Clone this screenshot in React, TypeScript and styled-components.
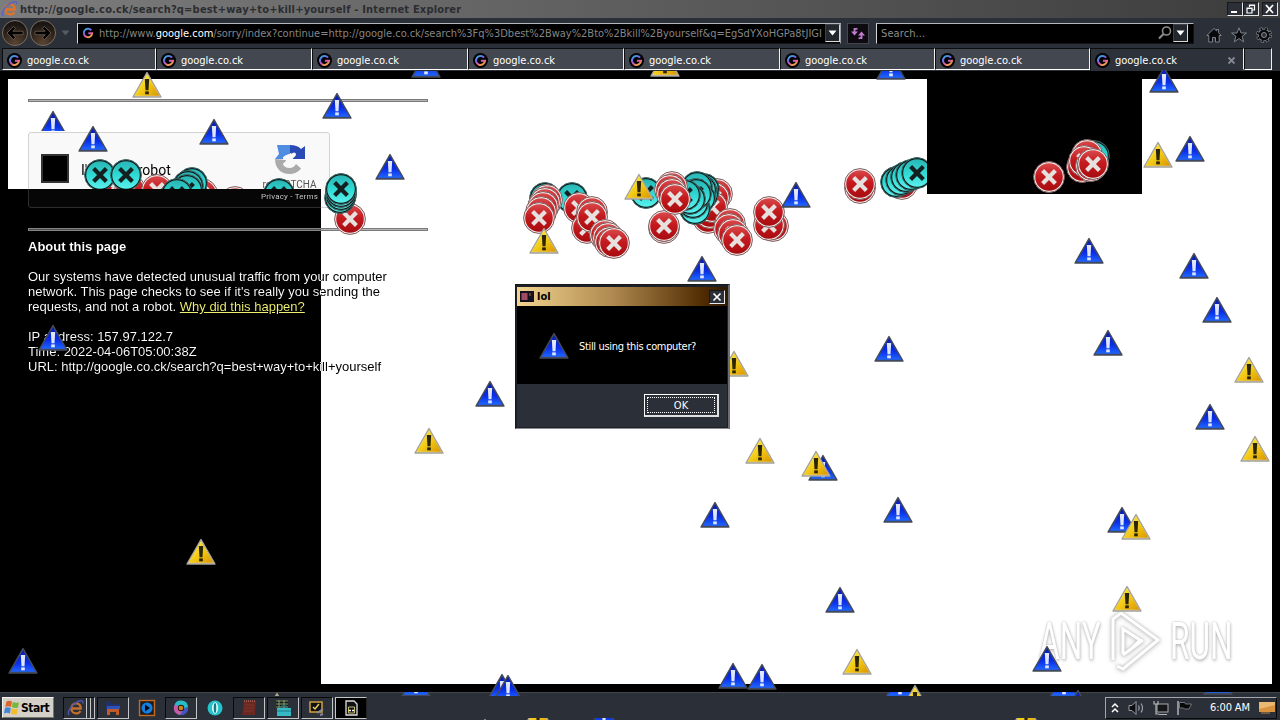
import React from 'react';
import styled, { createGlobalStyle, css } from 'styled-components';

type SpriteKind = 'blue' | 'yellow' | 'red' | 'cyan';

interface SpriteData {
  kind: SpriteKind;
  x: number;
  y: number;
  from?: number;
  to?: number;
  right?: number;
}

const tri = (kind: SpriteKind, list: number[][]): SpriteData[] =>
  list.map(([x, y, from, to]) => ({ kind, x, y, from, to }));

// x is the centre, y is the top of the triangle, then optional first and last visible rows
const backTriangles: SpriteData[] = [
  ...tri('blue', [
    [53, 110, 0, 131], [93, 125], [214, 118], [337, 92], [390, 153],
    [426, 51, 71], [891, 53, 71], [1164, 66, 70], [1190, 135], [702, 255],
    [1089, 237], [1194, 252], [1217, 296], [1108, 329], [889, 335],
    [490, 380], [1210, 403], [823, 454], [715, 501], [898, 496],
    [1122, 506], [840, 586], [1047, 645], [53, 324], [23, 647],
    [502, 673, 0, 696], [508, 674, 0, 696], [733, 662], [762, 663],
    [416, 670, 692, 696], [900, 671, 692, 696], [1064, 671, 692, 696], [1078, 689, 0, 696],
    [1218, 668, 692, 695], [604, 701, 718],
  ]),
  ...tri('yellow', [
    [147, 71], [665, 50, 71], [1158, 141], [734, 350], [1249, 356],
    [1255, 435], [760, 437], [816, 450], [429, 427], [201, 538],
    [1136, 513], [1127, 585], [857, 648], [915, 684, 0, 696],
    [538, 701, 718], [1026, 701, 718], [277, 692, 0, 696], [485, 718],
  ]),
];

const disc = (kind: SpriteKind, list: number[][], to?: number, right?: number): SpriteData[] =>
  list.map(([x, y]) => ({ kind, x, y: y - 16, to, right }));

const discs: SpriteData[] = [
  ...disc('red', [[115, 188], [130, 190], [157, 190], [202, 194], [235, 202]], 189),
  ...disc('cyan', [[100, 175], [126, 175], [192, 183], [188, 186], [187, 190], [177, 194], [279, 194]], 189),
  ...disc('red', [[350, 219]]),
  ...disc('cyan', [[340, 198], [341, 195], [341, 192], [341, 189]]),

  ...disc('cyan', [[545, 198], [572, 198]]),
  ...disc('red', [
    [547, 200], [545, 203], [543, 207], [541, 212], [539, 218],
    [579, 208], [587, 228], [592, 212], [592, 217],
    [605, 235], [608, 238], [610, 242], [614, 243],
  ]),
  ...disc('cyan', [[646, 193]]),
  ...disc('red', [
    [664, 228], [664, 226], [717, 194], [714, 198], [708, 218],
    [710, 213], [712, 207], [730, 224], [729, 229], [733, 234], [737, 240],
  ]),
  ...disc('cyan', [[704, 189], [703, 194], [701, 190], [697, 187], [700, 198], [695, 209], [693, 203], [696, 194], [690, 199], [685, 195]]),
  ...disc('red', [[672, 187], [670, 190], [672, 194], [675, 199]]),
  ...disc('red', [[773, 226], [769, 225], [769, 212]]),

  ...disc('red', [[860, 188], [860, 184]]),
  ...disc('red', [[902, 184]], undefined, 927),
  ...disc('cyan', [[896, 182], [901, 180], [906, 177], [911, 175], [917, 173]], undefined, 927),
  ...disc('red', [[1049, 177]]),
  ...disc('cyan', [[1094, 156]]),
  ...disc('red', [[1087, 155], [1082, 167], [1084, 161], [1091, 166], [1093, 164]]),
];

const frontTriangles: SpriteData[] = [
  ...tri('yellow', [[639, 173], [544, 227]]),
  ...tri('blue', [[796, 181]]),
];

const sprites = [...backTriangles, ...discs, ...frontTriangles];

const Gradients = () => (
  <HiddenSvg width="0" height="0">
    <defs>
      <linearGradient id="blueFill" x1="0" y1="0" x2="0" y2="1">
        <stop offset="0" stopColor="#0a1cb0" />
        <stop offset="0.6" stopColor="#0a2fe8" />
        <stop offset="1" stopColor="#1f66ff" />
      </linearGradient>
      <linearGradient id="yellowFill" x1="0" y1="0" x2="1" y2="1">
        <stop offset="0" stopColor="#fff34a" />
        <stop offset="0.55" stopColor="#f2c814" />
        <stop offset="1" stopColor="#da9400" />
      </linearGradient>
      <linearGradient id="redFill" x1="0" y1="0" x2="0" y2="1">
        <stop offset="0" stopColor="#d9494b" />
        <stop offset="0.45" stopColor="#c41a1f" />
        <stop offset="1" stopColor="#a80c10" />
      </linearGradient>
      <linearGradient id="cyanFill" x1="0" y1="0" x2="0" y2="1">
        <stop offset="0" stopColor="#2ab5b4" />
        <stop offset="0.5" stopColor="#2fd9d4" />
        <stop offset="1" stopColor="#5af0ec" />
      </linearGradient>
      <linearGradient id="googleRing" x1="0" y1="0" x2="0.6" y2="1">
        <stop offset="0" stopColor="#22b8d8" />
        <stop offset="0.45" stopColor="#7b62e8" />
        <stop offset="0.75" stopColor="#e65aa8" />
        <stop offset="1" stopColor="#e8a040" />
      </linearGradient>
    </defs>
  </HiddenSvg>
);

const Triangle = ({ kind }: { kind: SpriteKind }) => {
  const blue = kind === 'blue';
  return (
    <svg width="32" height="28" viewBox="0 0 32 28">
      <path d="M16 1.6 30 26H2Z" fill={blue ? '#3c4468' : '#ddd9c4'} stroke={blue ? '#454b58' : '#a5a195'} strokeWidth="1.4" strokeLinejoin="round" />
      <path d="M16 3.2 28.4 24.8H3.6Z" fill={`url(#${blue ? 'blueFill' : 'yellowFill'})`} />
      <path d="M13.8 8h4.4l-.7 11.3h-3Z" fill={blue ? '#dfe6ff' : '#2a2400'} />
      <rect x="14.2" y="20.4" width="3.6" height="2.9" fill={blue ? '#dfe6ff' : '#2a2400'} />
    </svg>
  );
};

const Disc = ({ kind }: { kind: SpriteKind }) => {
  const red = kind === 'red';
  return (
    <svg width="32" height="32" viewBox="0 0 32 32">
      <circle cx="16" cy="16" r="15.4" fill={red ? '#f4eeee' : '#0c1818'} stroke={red ? '#7d5a5a' : '#3f6a6a'} strokeWidth="1" />
      <circle cx="16" cy="16" r="13.8" fill={`url(#${red ? 'redFill' : 'cyanFill'})`} />
      <path d="m9.6 9.6 12.8 12.8m0-12.8L9.6 22.4" stroke={red ? '#e6e0de' : '#14201f'} strokeWidth="4.2" />
    </svg>
  );
};

const GoogleMark = ({ size = 15 }: { size?: number }) => (
  <svg width={size} height={size} viewBox="0 0 16 16">
    <circle cx="8" cy="8" r="8" fill="#000" />
    <path d="M11.8 5A4.8 4.8 0 1 0 12.8 8.3H8.4" fill="none" stroke="url(#googleRing)" strokeWidth="2.2" />
  </svg>
);

const IeMark = ({ dim }: { dim?: boolean }) => (
  <svg width="18" height="18" viewBox="0 0 18 18">
    <path d="M4.5 9.5h9.2c.2-3-1.8-5.2-4.5-5.2S4.4 6.5 4.4 9.4s2 5 4.8 5c2 0 3.400-.9 4.200-2.500" fill="none" stroke={dim ? '#c06f2c' : '#e0732a'} strokeWidth="2.3" />
    <path d="M2 16C-.5 13 5 5 11 2.500c4-1.600 5.500-.5 4.700 2" fill="none" stroke={dim ? '#4d55b0' : '#5a62c8'} strokeWidth="1.4" />
  </svg>
);

const Arrow = ({ flip }: { flip?: boolean }) => (
  <svg width="24" height="24" viewBox="0 0 24 24">
    <g transform={flip ? 'matrix(-1 0 0 1 24 0)' : undefined}>
      <path d="m4 12 6.500-6.500 2 2-2.700 2.800H20v3.400H9.800l2.700 2.800-2 2Z" fill="#020202" stroke="#8a7866" strokeWidth="0.6" />
    </g>
  </svg>
);

const Caret = ({ color = '#fff' }: { color?: string }) => (
  <svg width="9" height="6" viewBox="0 0 9 6"><path d="M.5.5h8l-4 5Z" fill={color} /></svg>
);

const RecaptchaLogo = () => (
  <svg width="32" height="32" viewBox="0 0 32 32">
    <path d="M3 2h13v10h-4L9 16H1l4-5Z" fill="#4f8de2" />
    <path d="M16 2c5 0 8 1 11 4l4-3v13H17l4-4-5-2Z" fill="#2a4bb5" />
    <path d="M1 16c0 9 6 15 14.500 15 5 0 9-2.200 11.500-5.500l-5-4.500c-1.400 2.500-3.500 4-6.500 4-3.400 0-5.500-1.400-6.700-4l4-4Z" fill="#ababab" />
    <path d="m11 15 4-2M14 17.500l6-6" stroke="#f9f9f9" strokeWidth="4" strokeLinecap="round" />
  </svg>
);

const App: React.FC = () => (
  <>
    <GlobalStyle />
    <Gradients />
    <Screen>
      <TitleBar>
        <IeMark />
        <WindowTitle>http://google.co.ck/search?q=best+way+to+kill+yourself - Internet Explorer</WindowTitle>
        <WindowButton><svg width="12" height="10"><path d="M2 8h6" stroke="#fff" strokeWidth="2" /></svg></WindowButton>
        <WindowButton>
          <svg width="12" height="10"><path d="M4.500 3V1h5v5h-2M2 4h5v5H2ZM2 4.500h5M4.500 1.500h5" fill="none" stroke="#fff" strokeWidth="1.2" /></svg>
        </WindowButton>
        <WindowButton $gap><svg width="12" height="10"><path d="m2 1 7 8m0-8L2 9" stroke="#fff" strokeWidth="1.7" /></svg></WindowButton>
      </TitleBar>

      <NavBar>
        <RoundButton><Arrow /></RoundButton>
        <RoundButton><Arrow flip /></RoundButton>
        <HistoryCaret><Caret color="#565b68" /></HistoryCaret>
        <AddressField>
          <GoogleMark size={14} />
          <Address>http://www.<b>google.com</b>/sorry/index?continue=http://google.co.ck/search%3Fq%3Dbest%2Bway%2Bto%2Bkill%2Byourself&amp;q=EgSdYXoHGPa8tJIGI</Address>
          <DropButton><Caret /></DropButton>
        </AddressField>
        <RefreshButton>
          <svg width="18" height="15" viewBox="0 0 18 15">
            <path d="M5.500 2v5M12.500 13V8M5.500 3.500l3-1M12.500 11.500l-3 1" stroke="#c07ace" strokeWidth="1.8" />
            <path d="M2 5.500h7L5.500 9.500ZM9 9.500h7L12.500 5.500Z" fill="#c07ace" />
          </svg>
        </RefreshButton>
        <SearchField>
          <Search>Search...</Search>
          <svg width="16" height="16" viewBox="0 0 16 16"><circle cx="9.500" cy="6" r="4" fill="none" stroke="#8c8c8c" strokeWidth="1.6" /><path d="M6.500 9 2 13.500" stroke="#8c8c8c" strokeWidth="2.2" /></svg>
          <DropButton><Caret /></DropButton>
        </SearchField>
        <ToolIcons>
          <svg width="16" height="16" viewBox="0 0 16 16"><path d="M8 1.500.8 8.500h2V15h3.700v-4.500h3V15h3.700V8.500h2L12.500 5.700V2.500h-2v1.400Z" fill="#090a0c" stroke="#8c9097" strokeWidth="0.9" /></svg>
          <svg width="16" height="16" viewBox="0 0 16 16"><path d="m8 .8 2 5.200h5.400l-4.300 3.300 1.600 5.500L8 11.500l-4.700 3.300 1.600-5.500L.6 6H6Z" fill="#090a0c" stroke="#8c9097" strokeWidth="0.9" /></svg>
          <svg width="16" height="16" viewBox="0 0 16 16">
            <circle cx="8" cy="8" r="6.4" fill="none" stroke="#8c9097" strokeWidth="3" strokeDasharray="2.8 2.227" />
            <circle cx="8" cy="8" r="5.4" fill="none" stroke="#8c9097" strokeWidth="1.6" />
            <circle cx="8" cy="8" r="6.4" fill="none" stroke="#090a0c" strokeWidth="2" strokeDasharray="1.8 3.227" strokeDashoffset="-0.5" />
            <circle cx="8" cy="8" r="4.1" fill="none" stroke="#090a0c" strokeWidth="2.6" />
            <circle cx="8" cy="8" r="2.5" fill="none" stroke="#8c9097" strokeWidth="0.9" />
          </svg>
        </ToolIcons>
      </NavBar>

      <TabStrip>
        {[154, 156, 156, 156, 156, 155, 155].map((w, i) => (
          <Tab key={i} $width={w}><GoogleMark />google.co.ck</Tab>
        ))}
        <Tab $width={154} $active>
          <GoogleMark />google.co.ck
          <TabClose><path d="m1.500 1.500 6 6m0-6-6 6" stroke="#85888e" strokeWidth="1.8" /></TabClose>
        </Tab>
        <NewTab />
      </TabStrip>

      <Viewport>
        <Page>
          <Rule />
          <Captcha>
            <Checkbox />
            <CaptchaLabel>I'm not a robot</CaptchaLabel>
            <CaptchaBrand>
              <RecaptchaLogo />
              <BrandName>reCAPTCHA</BrandName>
              <BrandLinks>Privacy - Terms</BrandLinks>
            </CaptchaBrand>
          </Captcha>
          <Rule />
          <About>
            <b>About this page</b>
            <p>
              Our systems have detected unusual traffic from your computer network. This page checks
              to see if it's really you sending the requests, and not a robot. <PageLink>Why did this happen?</PageLink>
            </p>
            <Details>
              IP address: 157.97.122.7<br />
              Time: 2022-04-06T05:00:38Z<br />
              URL: http://google.co.ck/search?q=best+way+to+kill+yourself
            </Details>
          </About>
          <InvertedArea />
          <BlackPatch />
        </Page>
      </Viewport>

      <Taskbar>
        <StartButton>
          <svg width="16" height="15" viewBox="0 0 16 15">
            <path d="M2.500 1.500q2.500-1.500 5.500 0L7 7q-3-1.500-5.800 0Z" fill="#e2622c" />
            <path d="M8.800 2q3.200 1.500 6.200.3L14 7.500q-3 1.200-6.200-.4Z" fill="#76b83e" />
            <path d="M1 8q2.500-1.500 5.800 0l-1 5.500q-3-1.500-5.800 0Z" fill="#3f87d8" />
            <path d="M7.600 8.300q3 1.500 6.200.3l-1 5.400q-3 1.200-6.200-.4Z" fill="#f3bd2b" />
          </svg>
          Start
        </StartButton>
        <TaskList>
          <TaskButton $stacked><IeMark dim /></TaskButton>
          <TaskButton>
            <svg width="18" height="18" viewBox="0 0 18 18"><path d="M2 3h5l1 2h8v7H2Z" fill="#22306e" /><path d="M3 7h13v3H3Z" fill="#2d52b8" /><path d="M3 16v-6h12v6h-3v-3H6v3Z" fill="#c05a2a" /></svg>
          </TaskButton>
          <TaskButton $flat>
            <svg width="18" height="18" viewBox="0 0 18 18"><rect x="1.500" y="1.500" width="15" height="15" fill="#1b1d24" stroke="#c46a20" strokeWidth="1.4" /><circle cx="9" cy="9" r="5.500" fill="#1480e0" /><path d="m7 5.500 5 3.500-5 3.500Z" fill="#05070c" /></svg>
          </TaskButton>
          <TaskButton>
            <svg width="18" height="18" viewBox="0 0 18 18"><circle cx="9" cy="9" r="7" fill="#25a7b8" /><path d="M2.500 6A7 7 0 0 1 16 8H9Z" fill="#28bcc8" /><path d="M2.500 6A7 7 0 0 0 8 16l3-6-4-3Z" fill="#c75aa8" /><path d="M16 8a7 7 0 0 1-8 8l4-6Z" fill="#4a4fc8" /><circle cx="9" cy="9" r="3.200" fill="#2a1608" /><circle cx="9" cy="9" r="2.300" fill="#d08020" /></svg>
          </TaskButton>
          <TaskButton $flat>
            <svg width="18" height="18" viewBox="0 0 18 18"><circle cx="9" cy="9" r="7.500" fill="#25c4cc" /><ellipse cx="9" cy="9" rx="3" ry="5.800" fill="#e8ffff" /><ellipse cx="9" cy="9" rx="1.300" ry="5" fill="#157c84" /></svg>
          </TaskButton>
          <TaskButton>
            <svg width="18" height="18" viewBox="0 0 18 18"><path d="M4 2h12l-1 14H2Z" fill="#6b2720" /><path d="M4 2h12" stroke="#b06a58" strokeWidth="1.500" strokeDasharray="1 1" /><path d="m5 6 9 .1M5 9h9M4 12h9" stroke="#7d382e" /></svg>
          </TaskButton>
          <TaskButton>
            <svg width="18" height="18" viewBox="0 0 18 18"><path d="M2 1h12v8H2Z" fill="#0d1a10" /><path d="M2 2h12M2 5h12M2 8h12M5 1v8M10 1v8" stroke="#8b9a78" /><path d="M3 9h14v8H3Z" fill="#35b9c4" /><path d="M7 9V7h6v2M3 12h14" fill="none" stroke="#1c7882" /></svg>
          </TaskButton>
          <TaskButton>
            <svg width="18" height="18" viewBox="0 0 18 18"><rect x="2" y="3" width="12" height="10" fill="#111" stroke="#d0a43c" strokeWidth="1.500" /><path d="m5 8 2 2 4-5" stroke="#e8d060" fill="none" strokeWidth="1.500" /><path d="m9 14 6-4m-3 6 3-1" stroke="#8a8a98" strokeWidth="2" /></svg>
          </TaskButton>
          <TaskButton $pressed>
            <svg width="16" height="18" viewBox="0 0 16 18"><path d="M3 2h8l3 3v11H3Z" fill="#111" stroke="#ddd" strokeWidth="1.300" /><path d="M5.500 8h6v6h-6Z" fill="none" stroke="#c8c070" /><path d="M6 11.500h5" stroke="#fff" strokeWidth="1.500" strokeDasharray="2 1" /></svg>
          </TaskButton>
        </TaskList>
        <Tray>
          <svg width="8" height="12" viewBox="0 0 8 12"><path d="m1 5 3-3 3 3M1 10l3-3 3 3" fill="none" stroke="#fff" strokeWidth="1.500" /></svg>
          <TrayIcons>
            <svg width="17" height="16" viewBox="0 0 17 16"><path d="M1 5.500h3l4-4v13l-4-4H1Z" fill="#0c0d10" stroke="#9a9da2" /><path d="M10.500 5.500q1.500 2.500 0 5M13 3.500q3 4.500 0 9" fill="none" stroke="#9a9da2" strokeWidth="1.200" /></svg>
            <svg width="17" height="16" viewBox="0 0 17 16"><rect x="5" y="4" width="11" height="8" fill="#14161a" stroke="#aaa" /><path d="M7 14.500h8M2 1v3h4V1M4 4v10h3M1.500 4h5" fill="none" stroke="#b5b5b5" strokeWidth="1.200" /></svg>
            <svg width="17" height="16" viewBox="0 0 17 16"><path d="M2 1v14" stroke="#b5b5b5" strokeWidth="1.500" /><path d="M3.500 2.500h5l1 1.500h6L13 9H8.500l-1-1h-4Z" fill="#08090b" stroke="#85888c" strokeWidth="0.800" /></svg>
          </TrayIcons>
          <Clock>6:00 AM</Clock>
          <svg width="16" height="14" viewBox="0 0 16 14"><path d="M0 1h16v10H0Z" fill="#d9933f" /><path d="M0 1h16v3L0 8Z" fill="#ebb872" /><path d="M2 12h9" stroke="#8a6a42" strokeWidth="1.500" /></svg>
        </Tray>
      </Taskbar>

      <Watermark>
        <WatermarkWord>ANY</WatermarkWord>
        <PlayMark>
          <path d="M5 49V8l8-6 37 27-35 29-6-3M15 43V18l17 11-9 9M15 44l20-15" fill="none" stroke="#fff" strokeWidth="3" />
        </PlayMark>
        <WatermarkWord>RUN</WatermarkWord>
      </Watermark>

      {sprites.map((s, i) => (
        <Sprite key={i} style={{ left: s.x - 16, top: s.y, clipPath: clipFor(s) }}>
          {s.kind === 'blue' || s.kind === 'yellow' ? <Triangle kind={s.kind} /> : <Disc kind={s.kind} />}
        </Sprite>
      ))}

      <Dialog>
        <DialogTitle>
          <svg width="14" height="11"><path d="M0 0h14v11H0Z" fill="#151020" /><path d="M1.500 2h6v7h-6Z" fill="#a04c5e" /><path d="M9 2h2v3H9Z" fill="#6a3b30" /></svg>
          <span>lol</span>
          <WindowButton><svg width="12" height="10"><path d="m2.500 1.500 7 7m0-7-7 7" stroke="#fff" strokeWidth="1.7" /></svg></WindowButton>
        </DialogTitle>
        <DialogBody><Triangle kind="blue" />Still using this computer?</DialogBody>
        <DialogFooter><OkButton><span>OK</span></OkButton></DialogFooter>
      </Dialog>
    </Screen>
  </>
);

export default App;


const clipFor = ({ x, y, from, to, right }: SpriteData) => {
  if (!from && !to && !right) return undefined;
  const top = from ? Math.max(0, from - y) : 0;
  const bottom = to ? Math.max(0, y + 32 - to) : 0;
  const side = right ? Math.max(0, x + 16 - right) : 0;
  return `inset(${top}px ${side}px ${bottom}px 0)`;
};

const uiFont = css`
  font-family: 'DejaVu Sans Condensed', 'DejaVu Sans', sans-serif;
  font-stretch: condensed;
  font-size: 11px;
`;

const GlobalStyle = createGlobalStyle`
  * {
    box-sizing: border-box;
  }

  body {
    margin: 0;
    background: #000;
    overflow: hidden;
  }

  svg {
    display: block;
    flex: none;
  }
`;

const HiddenSvg = styled.svg`
  position: absolute;
`;

const Screen = styled.div`
  ${uiFont}
  position: relative;
  display: flex;
  flex-direction: column;
  width: 1280px;
  height: 720px;
  overflow: hidden;
  background: #000;
  color: #fff;
`;

const TitleBar = styled.div`
  display: flex;
  align-items: center;
  height: 18px;
  padding: 0 2px 0 1px;
  background: linear-gradient(90deg, #7d7d7d, #606060 45%, #3c3c3c);
`;

const WindowTitle = styled.div`
  flex: 1;
  padding-left: 1px;
  color: #2b2d31;
  font-weight: bold;
  letter-spacing: 0.19px;
  white-space: nowrap;
`;

const WindowButton = styled.div<{ $gap?: boolean }>`
  display: flex;
  align-items: center;
  justify-content: center;
  width: 16px;
  height: 14px;
  margin-left: ${({ $gap }) => ($gap ? '3px' : '0')};
  border: 1px solid #16181c;
  border-right-color: #e8e8e8;
  border-bottom-color: #e8e8e8;
  background: #2b2f38;
`;

const NavBar = styled.div`
  display: flex;
  align-items: center;
  height: 30px;
  padding: 0 8px 0 2px;
  background: #2b2f38;
`;

const RoundButton = styled.div`
  width: 26px;
  height: 26px;
  margin-right: 2px;
  border: 1px solid #7b6d60;
  border-radius: 50%;
  background: radial-gradient(circle at 50% 90%, #5a4433, #1b1613 75%);
`;

const HistoryCaret = styled.div`
  width: 19px;
  padding-left: 3px;
`;

const field = css`
  display: flex;
  align-items: center;
  height: 21px;
  border: 1px solid #111316;
  border-top: 1px solid #b4b7bc;
  border-left: 1px solid #d5d7da;
  background: #000;
`;

const AddressField = styled.div`
  ${field}
  width: 764px;
  padding: 0 0 0 3px;
  border-right: 1px solid #9b9ea4;
`;

const Address = styled.div`
  flex: 1;
  padding-left: 4px;
  color: #858585;
  font-size: 11px;
  letter-spacing: -0.01px;
  white-space: nowrap;

  b {
    color: #fff;
    font-weight: normal;
  }
`;

const DropButton = styled.div`
  display: flex;
  flex: none;
  align-items: center;
  justify-content: center;
  width: 15px;
  height: 18px;
  border: 1px solid #3c4048;
  border-right-color: #d8d8d8;
  border-bottom-color: #d8d8d8;
  background: #22262d;
`;

const RefreshButton = styled.div`
  display: flex;
  align-items: center;
  justify-content: center;
  width: 22px;
  height: 21px;
  margin: 0 7px 0 6px;
  border: 1px solid #43464e;
  background: #0d0b10;
`;

const SearchField = styled.div`
  ${field}
  width: 318px;
  padding: 0 5px 0 4px;
`;

const Search = styled.div`
  flex: 1;
  color: #8c8c8c;
  letter-spacing: 0.1px;
`;

const ToolIcons = styled.div`
  display: flex;
  gap: 9px;
  margin-left: 12px;
  padding-top: 4px;
`;

const TabStrip = styled.div`
  display: flex;
  height: 23px;
  padding-left: 2px;
  background: #2b2f38;
`;

const Tab = styled.div<{ $width: number; $active?: boolean }>`
  display: flex;
  align-items: center;
  gap: 5px;
  width: ${({ $width }) => $width}px;
  height: 22px;
  padding: 2px 0 0 4px;
  border-top: 1px solid #0c0d0f;
  border-left: 1px solid #0c0d0f;
  border-right: 1px solid #f0f0f0;
  border-bottom: 1px solid ${({ $active }) => ($active ? '#2b2f38' : '#fff')};
  background: ${({ $active }) => ($active ? '#2d313a' : '#434750')};
  letter-spacing: -0.02px;
`;

const TabClose = styled.svg.attrs({ width: 9, height: 9 })`
  margin-left: auto;
  margin-right: 7px;
`;

const NewTab = styled.div`
  width: 28px;
  height: 22px;
  border: 1px solid #0c0d0f;
  border-right-color: #f0f0f0;
  border-bottom-color: #fff;
  background: #434750;
`;

const Viewport = styled.div`
  flex: 1;
  padding: 8px;
  background: #000;
`;

const Page = styled.div`
  position: relative;
  isolation: isolate;
  width: 1264px;
  height: 605px;
  padding: 20px 20px 0;
  overflow: hidden;
  background: #fff;
  color: #000;
  font: 13px/15px 'Liberation Sans', Arial, sans-serif;
`;

const Rule = styled.hr`
  width: 400px;
  height: 3px;
  margin: 0;
  border: 1px solid #7a7a7a;
  background: #b5b5b5;
`;

const Captcha = styled.div`
  display: flex;
  width: 302px;
  height: 76px;
  margin: 30px 0 20px;
  border: 1px solid #d3d3d3;
  border-radius: 3px;
  background: #f9f9f9;
  font-family: Roboto, sans-serif;
`;

const Checkbox = styled.div`
  width: 28px;
  height: 29px;
  margin: 21px 12px 0;
  border: 2px solid #333;
  background: #000;
`;

const CaptchaLabel = styled.div`
  flex: 1;
  padding-top: 30px;
  font-size: 14px;
`;

const CaptchaBrand = styled.div`
  display: flex;
  flex-direction: column;
  align-items: center;
  width: 79px;
  padding-top: 10px;
`;

const BrandName = styled.div`
  margin-top: 4px;
  color: #555;
  font-size: 10px;
  line-height: 12px;
`;

const BrandLinks = styled.div`
  color: #333;
  font-size: 8px;
  line-height: 11px;
  letter-spacing: 0.18px;
`;

const About = styled.div`
  width: 400px;
  padding-top: 8px;

  p {
    width: 380px;
    margin: 15px 0;
  }
`;

const PageLink = styled.a`
  color: #0e0d90;
  text-decoration: underline;
`;

const Details = styled.div`
  white-space: nowrap;
`;

const InvertedArea = styled.div`
  position: absolute;
  left: 0;
  top: 110px;
  width: 313px;
  height: 495px;
  background: #fff;
  mix-blend-mode: difference;
`;

const BlackPatch = styled.div`
  position: absolute;
  left: 919px;
  top: 0;
  width: 215px;
  height: 115px;
  background: #000;
`;

const Taskbar = styled.div`
  display: flex;
  align-items: center;
  height: 28px;
  padding: 2px 3px 0 2px;
  border-top: 1px solid #43464b;
  background: #2b2f38;
`;

const StartButton = styled.div`
  display: flex;
  align-items: center;
  gap: 1px;
  width: 52px;
  height: 21px;
  padding-left: 1px;
  border: 1px solid #f4f2ec;
  border-right-color: #77746c;
  border-bottom-color: #77746c;
  background: #d4d0c8;
  color: #000;
  font-size: 12px;
  font-weight: bold;
  letter-spacing: -0.5px;
`;

const TaskList = styled.div`
  display: flex;
  flex: 1;
  gap: 2px;
  margin-left: 9px;
`;

const TaskButton = styled.div<{ $flat?: boolean; $pressed?: boolean; $stacked?: boolean }>`
  display: flex;
  align-items: center;
  justify-content: ${({ $stacked }) => ($stacked ? 'flex-start' : 'center')};
  width: 32px;
  height: 22px;
  padding-left: ${({ $stacked }) => ($stacked ? '3px' : '0')};
  border: 1px solid ${({ $flat }) => ($flat ? 'transparent' : '#08090b')};
  ${({ $flat }) => !$flat && css`
    border-right-color: #c4c5c7;
    border-bottom-color: #c4c5c7;
  `}
  ${({ $pressed }) => $pressed && css`
    border: 1px solid #c4c5c7;
    border-right-color: #222;
    background: #000;
  `}
  ${({ $stacked }) => $stacked && css`
    background: linear-gradient(90deg, transparent 22px, #c4c5c7 22px 23px, #2b2f38 23px 26px, #c4c5c7 26px 27px, #2b2f38 27px 29px);
  `}
`;

const Tray = styled.div`
  display: flex;
  align-items: center;
  width: 172px;
  height: 22px;
  padding: 0 1px 0 5px;
  border: 1px solid #a4a6aa;
  border-right-color: #08090b;
  border-bottom-color: #08090b;
`;

const TrayIcons = styled.div`
  display: flex;
  gap: 7px;
  margin-left: 9px;
`;

const Clock = styled.div`
  flex: 1;
  padding-left: 17px;
  letter-spacing: -0.1px;
  white-space: nowrap;
`;

const Watermark = styled.div`
  position: absolute;
  left: 1039px;
  top: 610px;
  display: flex;
  align-items: center;
  gap: 6px;
`;

const WatermarkWord = styled.div`
  width: 63px;
  color: #fff;
  font: 400 51px/64px Roboto, sans-serif;
  text-shadow: 0 0 3px #b5b5b5, 1px 2px 4px #c4c4c4;
  transform: scaleX(0.62);
  transform-origin: 0 50%;
`;

const PlayMark = styled.svg.attrs({ width: 56, height: 62, viewBox: '0 0 56 62' })`
  overflow: visible;
  filter: drop-shadow(0 0 1.5px #bbb) drop-shadow(0 1px 2px #d0d0d0);
`;

const Sprite = styled.div`
  position: absolute;
  width: 32px;
  height: 32px;
`;

const Dialog = styled.div`
  position: absolute;
  left: 515px;
  top: 284px;
  display: flex;
  flex-direction: column;
  width: 215px;
  height: 145px;
  padding: 2px 1px 1px;
  border: 1px solid #16181c;
  border-right: 2px solid #6c6e73;
  border-bottom: 1px solid #8b8d92;
  background: #1d2026;
`;

const DialogTitle = styled.div`
  display: flex;
  align-items: center;
  height: 19px;
  padding: 0 2px 0 3px;
  background: linear-gradient(90deg, #f2d58f, #b08a50 45%, #4d2900 90%, #2e1800);
  color: #000;
  font-size: 11px;
  font-weight: bold;

  span {
    flex: 1;
    padding-left: 3px;
  }
`;

const DialogBody = styled.div`
  display: flex;
  align-items: center;
  gap: 9px;
  height: 78px;
  padding: 2px 0 0 21px;
  background: #000;
  letter-spacing: -0.33px;
  white-space: nowrap;
`;

const DialogFooter = styled.div`
  display: flex;
  flex: 1;
  justify-content: flex-end;
  padding: 10px 8px 0 0;
  background: #2b2f38;
`;

const OkButton = styled.div`
  width: 75px;
  height: 23px;
  padding: 2px;
  border: 1px solid #fff;
  border-right: 2px solid #e0e0e0;
  border-bottom: 2px solid #e0e0e0;
  background: #2b2f38;

  span {
    display: flex;
    align-items: center;
    justify-content: center;
    height: 100%;
    border: 1px dotted #fff;
  }
`;
